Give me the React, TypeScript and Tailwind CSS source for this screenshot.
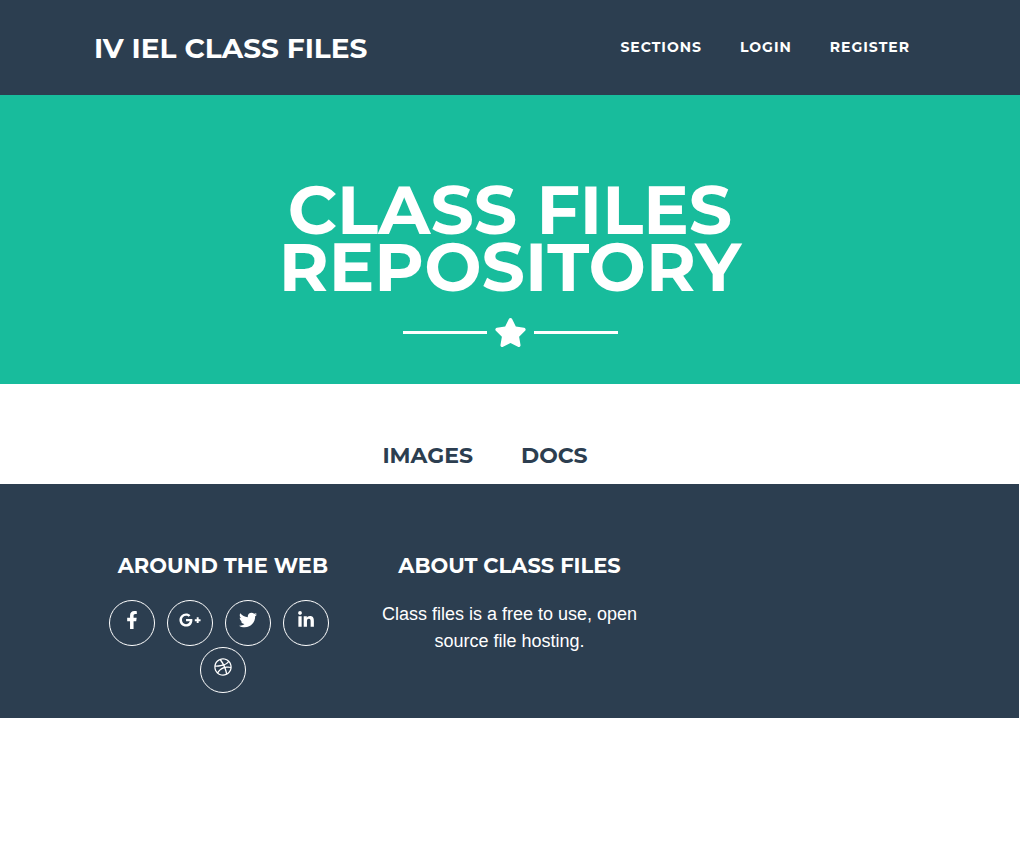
import { FaDribbble, FaFacebookF, FaGooglePlusG, FaLinkedinIn, FaStar, FaTwitter } from "react-icons/fa";

const navLinks = ["Sections", "Login", "Register"];
const fileTypes = ["Images", "Docs"];
const socials = [
  { label: "Facebook", Icon: FaFacebookF },
  { label: "Google Plus", Icon: FaGooglePlusG },
  { label: "Twitter", Icon: FaTwitter },
  { label: "LinkedIn", Icon: FaLinkedinIn },
  { label: "Dribbble", Icon: FaDribbble },
];

export default function App() {
  return (
    <div className="bg-white font-['Liberation_Sans',Arial,sans-serif] text-[18px] leading-[27px] text-[#2c3e50]">
      <header className="bg-[#2c3e50] font-['Montserrat','Inter',sans-serif] font-bold uppercase text-white">
        <div className="mx-auto flex h-[95px] max-w-[860px] items-center justify-between px-[14px]">
          <a href="#top" className="text-[28px] leading-[44px]">IV IEL Class Files</a>
          <nav className="flex gap-[38px] pr-4 text-[14px] leading-[21px] tracking-[1px]">
            {navLinks.map((name) => (
              <a key={name} href="#top">{name}</a>
            ))}
          </nav>
        </div>
      </header>

      <section className="bg-[#18bc9c] px-6 pt-[86px] pb-[37px] text-center text-white">
        <h1 className="mx-auto max-w-[520px] font-['Montserrat','Inter',sans-serif] text-[68px] leading-[57px] font-bold uppercase">
          Class Files Repository
        </h1>
        <div className="mt-[23px] flex items-center justify-center gap-[7px]">
          <span className="h-[3px] w-[84px] bg-white" />
          <FaStar className="h-[29px] w-[33px]" />
          <span className="h-[3px] w-[84px] bg-white" />
        </div>
      </section>

      <main className="flex justify-center pt-[58px] pr-[50px] pb-[15px]">
        <ul className="flex gap-12 font-['Montserrat','Inter',sans-serif] text-[22px] font-bold uppercase">
          {fileTypes.map((name) => (
            <li key={name}><a href="#top">{name}</a></li>
          ))}
        </ul>
      </main>

      <footer className="mr-px bg-[#2c3e50] pt-[68px] pb-[25px] text-center text-white">
        <div className="mx-auto grid max-w-[860px] grid-cols-3">
          <section className="px-[15px]">
            <h2 className="font-['Montserrat','Inter',sans-serif] text-[21px] font-bold uppercase">Around the Web</h2>
            <ul className="mt-[21px] flex flex-wrap justify-center gap-x-1 gap-y-px">
              {socials.map(({ label, Icon }) => (
                <li key={label} className="mr-2 last:mr-0">
                  <a href="#top" aria-label={label} className="flex h-[46px] w-[46px] items-center justify-center rounded-full border border-white pb-[6px]">
                    <Icon className="h-[18px] w-[22px]" />
                  </a>
                </li>
              ))}
            </ul>
          </section>
          <section className="px-[15px]">
            <h2 className="font-['Montserrat','Inter',sans-serif] text-[21px] font-bold uppercase">About Class Files</h2>
            <p className="mt-[22px]">Class files is a free to use, open source file hosting.</p>
          </section>
        </div>
      </footer>
    </div>
  );
}
